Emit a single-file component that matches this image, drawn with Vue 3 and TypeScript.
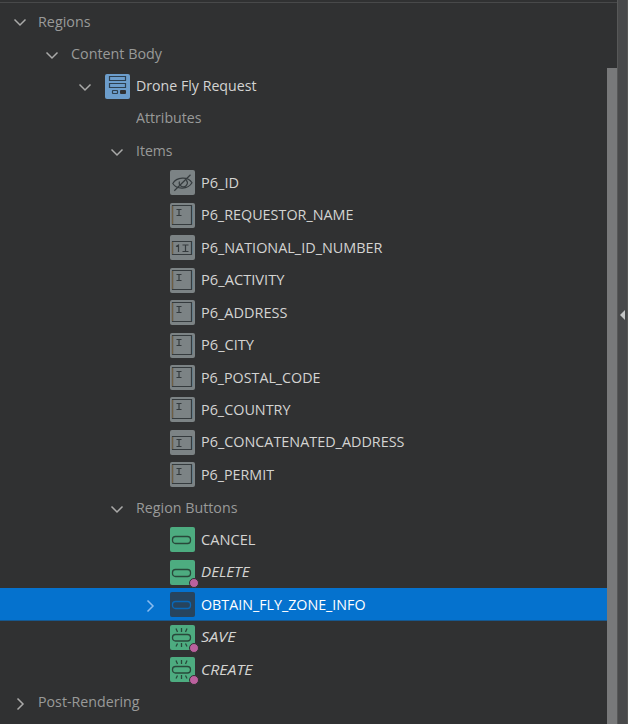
<script setup lang="ts">
import type { Directive } from 'vue'

type Icon = 'region' | 'hidden' | 'area' | 'number' | 'field' | 'button' | 'hot'

interface Node {
  label: string
  level: number
  width: number
  icon?: Icon
  toggle?: 'open' | 'closed'
  muted?: boolean
  badge?: boolean
  selected?: boolean
}

const nodes: Node[] = [
  { label: 'Regions', level: 0, width: 52.5, toggle: 'open', muted: true },
  { label: 'Content Body', level: 1, width: 91, toggle: 'open', muted: true },
  { label: 'Drone Fly Request', level: 2, width: 120.5, toggle: 'open', icon: 'region' },
  { label: 'Attributes', level: 3, width: 65.5, muted: true },
  { label: 'Items', level: 3, width: 36.5, toggle: 'open', muted: true },
  { label: 'P6_ID', level: 4, width: 38, icon: 'hidden' },
  { label: 'P6_REQUESTOR_NAME', level: 4, width: 152.5, icon: 'area' },
  { label: 'P6_NATIONAL_ID_NUMBER', level: 4, width: 181.5, icon: 'number' },
  { label: 'P6_ACTIVITY', level: 4, width: 83.5, icon: 'area' },
  { label: 'P6_ADDRESS', level: 4, width: 86.5, icon: 'area' },
  { label: 'P6_CITY', level: 4, width: 53, icon: 'area' },
  { label: 'P6_POSTAL_CODE', level: 4, width: 119.5, icon: 'area' },
  { label: 'P6_COUNTRY', level: 4, width: 89.5, icon: 'area' },
  { label: 'P6_CONCATENATED_ADDRESS', level: 4, width: 203.5, icon: 'field' },
  { label: 'P6_PERMIT', level: 4, width: 73, icon: 'area' },
  { label: 'Region Buttons', level: 3, width: 101.5, toggle: 'open', muted: true },
  { label: 'CANCEL', level: 4, width: 54.5, icon: 'button' },
  { label: 'DELETE', level: 4, width: 48.5, icon: 'button', badge: true },
  { label: 'OBTAIN_FLY_ZONE_INFO', level: 4, width: 164.5, icon: 'button', toggle: 'closed', selected: true },
  { label: 'SAVE', level: 4, width: 34.5, icon: 'hot', badge: true },
  { label: 'CREATE', level: 4, width: 51.5, icon: 'hot', badge: true },
  { label: 'Post-Rendering', level: 0, width: 101.5, toggle: 'closed', muted: true },
]

// Condenses a label to its designed width.
const vFit: Directive<HTMLElement, number> = {
  mounted(el, { value }) {
    el.style.transform = `scaleX(${value / el.getBoundingClientRect().width})`
  },
}
</script>

<template>
  <main class="panel">
    <section class="tree-pane">
      <div class="tree" role="tree">
        <div
          v-for="n in nodes"
          :key="n.label"
          class="row"
          :class="[`level-${n.level}`, { muted: n.muted, selected: n.selected }]"
          role="treeitem"
        >
          <span class="toggle">
            <svg v-if="n.toggle === 'open'" width="14" height="14" viewBox="0 0 14 14"><path d="M1.500 4.500 7 10l5.500-5.500" /></svg>
            <svg v-else-if="n.toggle === 'closed'" width="14" height="14" viewBox="0 0 14 14"><path d="M4.500 1.500 10 7l-5.500 5.500" /></svg>
          </span>
          <span v-if="n.icon" class="icon" :class="n.icon">
            <svg width="25" height="25" viewBox="0 0 25 25">
              <g v-if="n.icon === 'region'">
                <path d="M4.500 2.500h16v4h-16zM4.500 9.500h16v4h-16z" />
                <rect x="7.500" y="16.500" width="5" height="3" rx=".5" />
                <rect class="solid" x="15" y="16" width="6" height="4" rx="1" />
              </g>
              <g v-else-if="n.icon === 'hidden'">
                <path d="M2.800 13.500C6.500 6.800 18 6.200 22 12.800 18 19.500 7 20 2.800 13.500z" />
                <path d="M16.300 10.200a4 4 0 1 1-6.800 1.300M4.300 20.800 20.500 4.700" />
              </g>
              <g v-else-if="n.icon === 'area'">
                <path d="M2.500 2.500h19v19h-19z" />
                <path d="M6.500 6.500h5M9 6.500v6M6.500 12.500h5" />
                <path class="fringe-warm" d="M2.500 3v18" /><path class="fringe-cool" d="M22.500 3v18" />
              </g>
              <g v-else-if="n.icon === 'number'">
                <path d="M2.500 6.500h19v13h-19z" />
                <path d="M6 11.500 8.500 10v7M12.500 10h6M15.500 10v6.500M12.500 16.500h6" />
                <path class="fringe-warm" d="M2.500 7v12" /><path class="fringe-cool" d="M22.500 7v12" />
              </g>
              <g v-else-if="n.icon === 'field'">
                <path d="M2.500 6.500h19v13h-19z" />
                <path d="M6.500 9.500h5M9 9.500v7M6.500 16.500h5" />
                <path class="fringe-warm" d="M2.500 7v12" /><path class="fringe-cool" d="M22.500 7v12" />
              </g>
              <g v-else-if="n.icon === 'button'">
                <rect x="2.500" y="9.500" width="18" height="7" rx="3" />
              </g>
              <g v-else>
                <rect x="2.500" y="9.500" width="18" height="6.500" rx="3" />
                <path d="m6 3.500 1.500 3.500M11.500 3v4M17 3.500 15.500 7M7.500 18.500 6 21.500M11.500 18v4M15.500 18.500 17 21.500" />
              </g>
            </svg>
            <i v-if="n.badge" class="badge"></i>
          </span>
          <span v-fit="n.width" class="label" :class="{ italic: n.badge }">{{ n.label }}</span>
        </div>
      </div>
      <div class="scrollbar"><div class="thumb"></div></div>
    </section>
    <aside class="splitter">
      <svg width="6" height="10" viewBox="0 0 6 10"><path d="M0 5 5 0v10z" /></svg>
    </aside>
  </main>
</template>

<style>
body {
  margin: 0;
  background: #303132;
}
</style>

<style scoped>
.panel {
  display: flex;
  width: 628px;
  height: 724px;
  overflow: hidden;
  background: #303132;
  font: 15px/32.45px "Open Sans", "Noto Sans", sans-serif;
}
.tree-pane {
  display: flex;
  box-sizing: border-box;
  width: 617px;
  padding-top: 2px;
  background: linear-gradient(#48494a, #48494a) 0 2px / 100% 1px no-repeat;
}
.tree {
  width: 607px;
  padding-top: 2px;
}
.row {
  display: flex;
  height: 32.45px;
  color: #d4d4d2;
  white-space: nowrap;
}
.level-0 { padding-left: 12.5px; }
.level-1 { padding-left: 45px; }
.level-2 { padding-left: 77.500px; }
.level-3 { padding-left: 110px; }
.level-4 { padding-left: 142.500px; }
.muted { color: #999a99; }
.selected {
  background: #0572ce;
  box-shadow: 0 .6px #0572ce;
  color: #fff;
}
.toggle {
  flex: none;
  width: 26px;
}
.level-0 .toggle { width: 25.500px; }
.toggle svg {
  display: block;
  margin-top: 11.400px;
  fill: none;
  stroke: #aaaaa9;
  stroke-width: 1.500;
}
.selected .toggle svg { stroke: #8abcf0; }
.icon {
  position: relative;
  flex: none;
  width: 25px;
  height: 25px;
  margin: 4.220px 6px 0 1.500px;
  border-radius: 2px;
  background: #7c8385;
}
.icon.region {
  margin-top: 5px;
  background: #6c9dcb;
}
.icon.button,
.icon.hot { background: #4dac80; }
.selected .icon.button { background: #27445d; }
.icon svg {
  display: block;
  fill: none;
  stroke: #353b3e;
  stroke-width: 1.200;
}
.region svg { stroke: #2d4050; }
.button svg,
.hot svg { stroke: #29483a; stroke-width: 1.300; }
.selected .icon svg { stroke: #0868b9; }
.solid { fill: #303132; stroke: none; }
.fringe-warm { stroke: #705f43; }
.fringe-cool { stroke: #5c7c8c; stroke-width: .7; }
.badge {
  position: absolute;
  right: -4px;
  bottom: -3px;
  width: 8px;
  height: 8px;
  border: 1px solid #303132;
  border-radius: 50%;
  background: #bb619e;
}
.label {
  flex: none;
  align-self: flex-start;
  margin-top: -.25px;
  transform-origin: left center;
}
.muted .label { margin-top: .16px; }
.row:first-child .label { margin-top: 1px; }
.italic { font-style: italic; }
.scrollbar {
  width: 10px;
  padding-top: 66px;
}
.thumb {
  height: 656px;
  background: #78797a;
}
.splitter {
  display: flex;
  align-items: center;
  justify-content: flex-end;
  box-sizing: border-box;
  width: 11px;
  padding-bottom: 94px;
  padding-right: 1px;
  border-left: 1px solid #575858;
  border-right: 1px solid #565755;
  background: #48494a;
}
.splitter svg { fill: #c4c5c5; }
</style>
